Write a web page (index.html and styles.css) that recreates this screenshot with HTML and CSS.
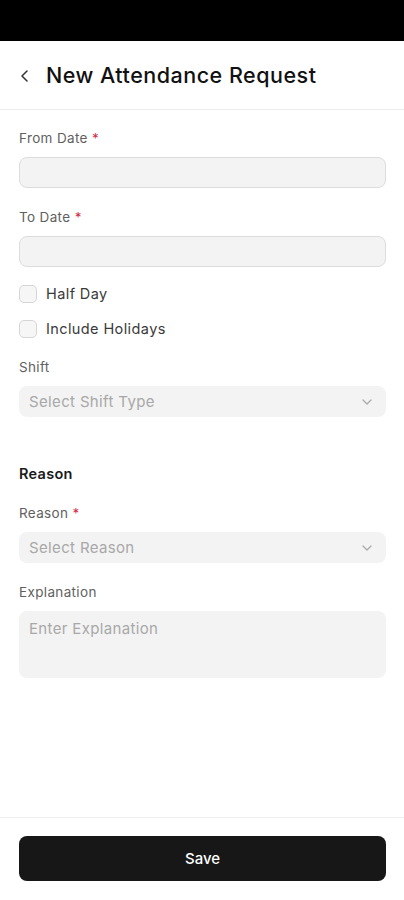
FILE: index.html
```html
<!DOCTYPE html>
<html>
<head>
<meta charset="utf-8">
<link rel="stylesheet" href="styles.css">
</head>
<body>
<div class="page">
  <div class="statusbar"></div>
  <header class="header">
    <svg class="back" width="12" height="14" viewBox="0 0 12 14"><path d="M8 2 L3 7 L8 12" fill="none" stroke="#333" stroke-width="1.5" stroke-linecap="round" stroke-linejoin="round"/></svg>
    <h1 class="title">New Attendance Request</h1>
  </header>
  <main class="form">
    <div class="field">
      <label class="label">From Date <span class="req">*</span></label>
      <div class="input"></div>
    </div>
    <div class="field">
      <label class="label">To Date <span class="req">*</span></label>
      <div class="input"></div>
    </div>
    <div class="checks">
      <div class="check"><span class="box"></span><span>Half Day</span></div>
      <div class="check"><span class="box"></span><span>Include Holidays</span></div>
    </div>
    <div class="field">
      <label class="label">Shift</label>
      <div class="select"><span>Select Shift Type</span>
        <svg width="12" height="8" viewBox="0 0 12 8"><path d="M2 2 L6 6 L10 2" fill="none" stroke="#aaa" stroke-width="1.3" stroke-linecap="round" stroke-linejoin="round"/></svg>
      </div>
    </div>
    <h2 class="section">Reason</h2>
    <div class="field">
      <label class="label">Reason <span class="req">*</span></label>
      <div class="select"><span>Select Reason</span>
        <svg width="12" height="8" viewBox="0 0 12 8"><path d="M2 2 L6 6 L10 2" fill="none" stroke="#aaa" stroke-width="1.3" stroke-linecap="round" stroke-linejoin="round"/></svg>
      </div>
    </div>
    <div class="field">
      <label class="label">Explanation</label>
      <div class="textarea">Enter Explanation</div>
    </div>
  </main>
  <footer class="footer">
    <button class="save">Save</button>
  </footer>
</div>
</body>
</html>
```
FILE: styles.css
```css
* { box-sizing: border-box; }
body {
  margin: 0;
  font-family: Inter, "Noto Sans", sans-serif;
  background: #fff;
  color: #1a1a1a;
}
.page {
  height: 900px;
  display: flex;
  flex-direction: column;
}
.statusbar {
  height: 41px;
  background: #000;
}
.header {
  height: 69px;
  display: flex;
  align-items: center;
  gap: 15px;
  padding: 0 19px;
  border-bottom: 1px solid #ececec;
}
.back { margin-top: 1px; }
.title {
  margin: 0;
  font-size: 21.5px;
  font-weight: 500;
  color: #111;
  letter-spacing: 0.5px;
}
.form {
  flex: 1;
  padding: 19px 18px 0 19px;
  display: flex;
  flex-direction: column;
}
.field {
  display: flex;
  flex-direction: column;
  gap: 10px;
  margin-bottom: 20px;
}
.label {
  font-size: 13.5px;
  line-height: 18px;
  color: #616161;
  letter-spacing: 0.35px;
}
.req { color: #d0304a; }
.input {
  height: 31px;
  border: 1px solid #dcdcdc;
  border-radius: 8px;
  background: #f3f3f3;
}
.checks {
  display: flex;
  flex-direction: column;
  gap: 17px;
  margin-top: -2px;
  margin-bottom: 20px;
}
.check {
  display: flex;
  align-items: center;
  gap: 9px;
  font-size: 14.5px;
  line-height: 18px;
  color: #3a3a3a;
  letter-spacing: 0.4px;
}
.box {
  width: 18px;
  height: 18px;
  border: 1px solid #d6d6d6;
  border-radius: 5px;
  background: #f6f6f6;
}
.select {
  height: 31px;
  border-radius: 8px;
  background: #f3f3f3;
  display: flex;
  align-items: center;
  justify-content: space-between;
  padding: 0 13px 0 10px;
  font-size: 15px;
  color: #a8a8a8;
  letter-spacing: 0.35px;
}
.section {
  margin: 28px 0 21px 0;
  font-size: 14.5px;
  font-weight: 600;
  line-height: 18px;
  color: #1a1a1a;
  letter-spacing: 0.3px;
}
.textarea {
  height: 67px;
  border-radius: 8px;
  background: #f3f3f3;
  padding: 8px 10px;
  font-size: 15px;
  color: #a8a8a8;
  letter-spacing: 0.35px;
}
.footer {
  border-top: 1px solid #efefef;
  padding: 18px 18px 19px 19px;
}
.save {
  width: 100%;
  height: 45px;
  border: none;
  border-radius: 8px;
  background: #171717;
  color: #fff;
  font-family: Inter, "Noto Sans", sans-serif;
  font-size: 15px;
  font-weight: 500;
}
```
